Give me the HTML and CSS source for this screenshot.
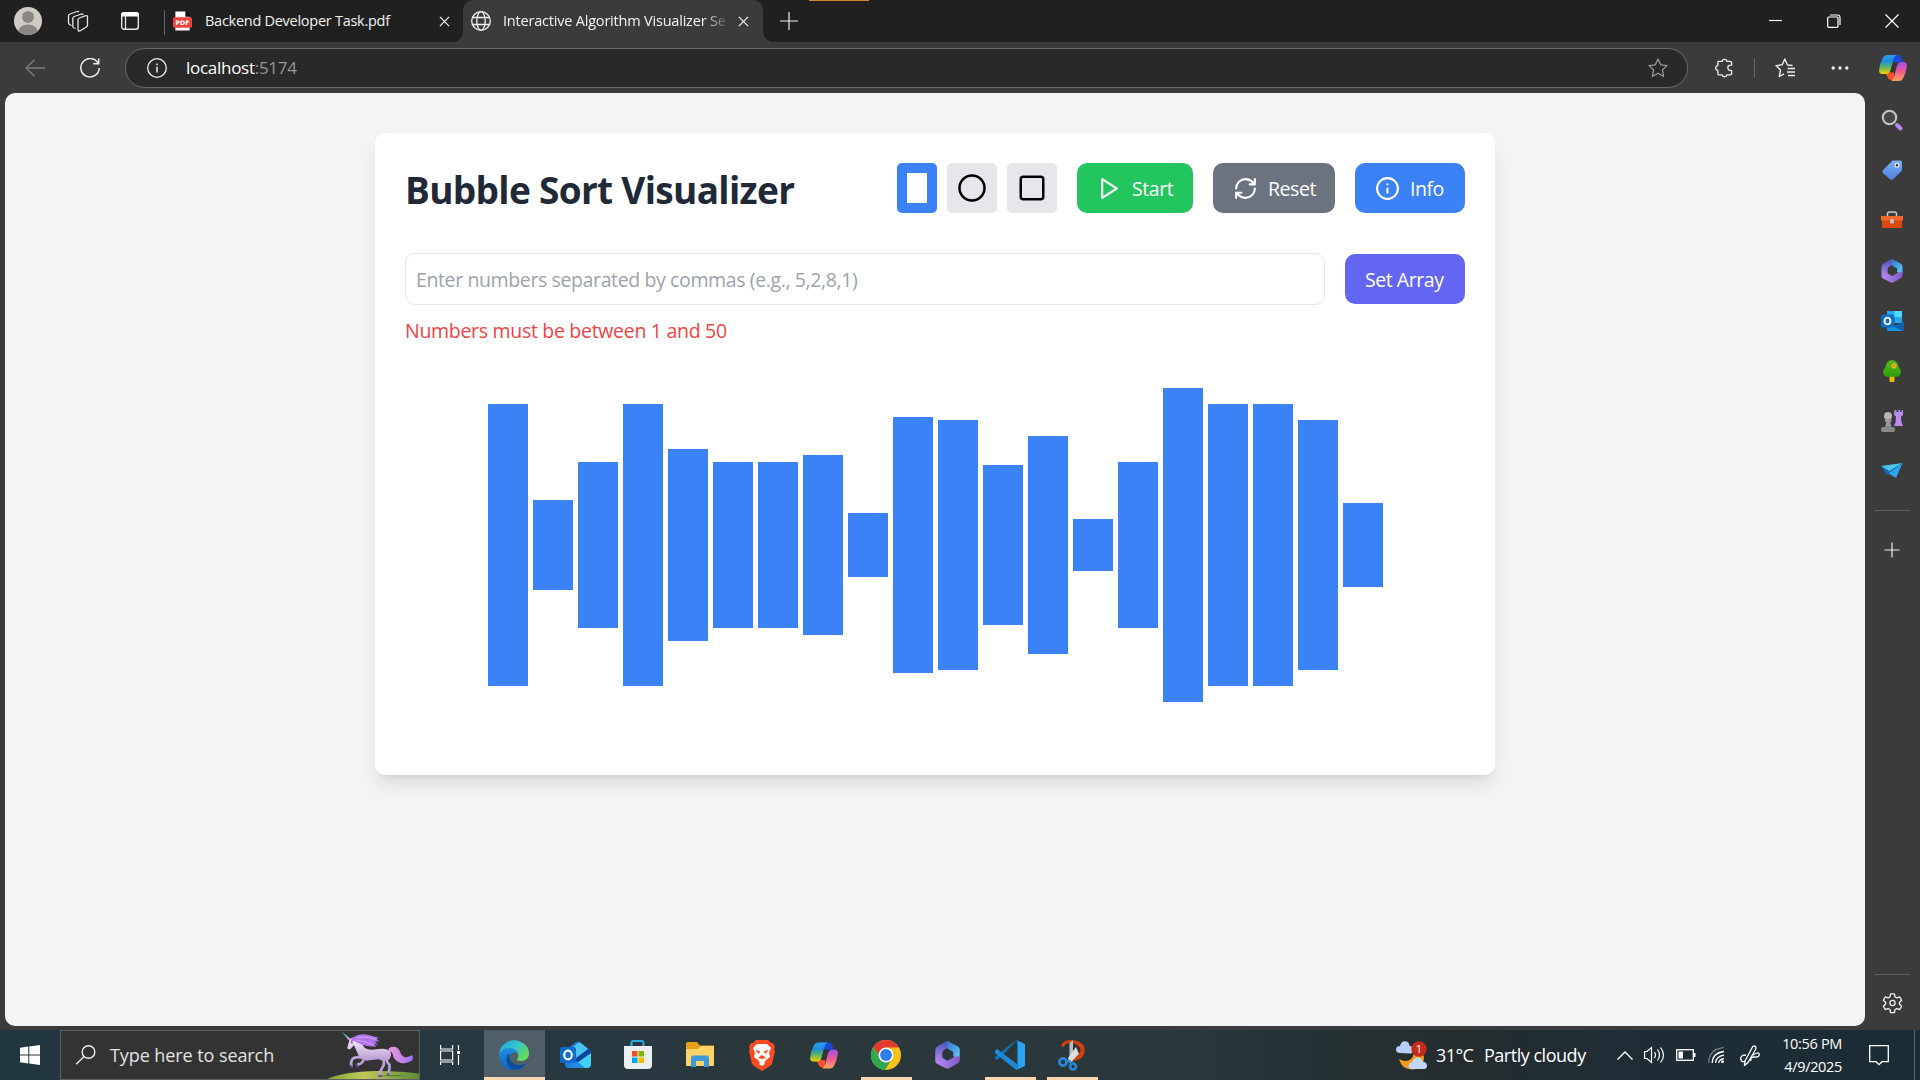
FILE: index.html
```html
<!DOCTYPE html>
<html lang="en">
<head>
<meta charset="utf-8">
<title>Interactive Algorithm Visualizer</title>
<link rel="stylesheet" href="styles.css">
</head>
<body>
<svg class="defs" width="0" height="0" aria-hidden="true">
  <defs>
    <linearGradient id="cpA" x1="0" y1="0" x2="0" y2="1"><stop offset="0" stop-color="#2a9df4"/><stop offset=".35" stop-color="#1b8fd8"/><stop offset=".65" stop-color="#5fb760"/><stop offset="1" stop-color="#f5d000"/></linearGradient>
    <linearGradient id="cpB" x1="0" y1="0" x2="0" y2="1"><stop offset="0" stop-color="#a24df0"/><stop offset=".5" stop-color="#ef5b92"/><stop offset="1" stop-color="#ffa35c"/></linearGradient>
    <linearGradient id="mA" x1="0" y1="0" x2="1" y2="1"><stop offset="0" stop-color="#2b63c9"/><stop offset="1" stop-color="#62d2f8"/></linearGradient>
    <linearGradient id="mB" x1="0" y1="0" x2="0" y2="1"><stop offset="0" stop-color="#4a52b8"/><stop offset="1" stop-color="#b98af0"/></linearGradient>
    <linearGradient id="mC" x1="0" y1="0" x2="1" y2="0"><stop offset="0" stop-color="#b58cf2"/><stop offset="1" stop-color="#8458c9"/></linearGradient>
    <linearGradient id="edA" x1="0" y1="0" x2="1" y2=".6"><stop offset="0" stop-color="#1fa5e6"/><stop offset=".55" stop-color="#35c4c8"/><stop offset="1" stop-color="#62dd58"/></linearGradient>
    <linearGradient id="edB" x1="0" y1="0" x2="0" y2="1"><stop offset="0" stop-color="#1f8fe0"/><stop offset="1" stop-color="#1160b8"/></linearGradient>
    <linearGradient id="uniBody" x1="0" y1="0" x2="0" y2="1"><stop offset="0" stop-color="#f8f2f8"/><stop offset="1" stop-color="#b99ad6"/></linearGradient>
    <linearGradient id="uniTail" x1="0" y1="0" x2="1" y2="0"><stop offset="0" stop-color="#f29adf"/><stop offset="1" stop-color="#9b6cf5"/></linearGradient>
    <linearGradient id="uniHill" x1="0" y1="0" x2="1" y2="0"><stop offset="0" stop-color="#7da534"/><stop offset=".4" stop-color="#c2c85a"/><stop offset="1" stop-color="#5d8a3a"/></linearGradient>
    <linearGradient id="tagG" x1="0" y1="0" x2="0" y2="1"><stop offset="0" stop-color="#79aef5"/><stop offset="1" stop-color="#4f7fe0"/></linearGradient>
    <linearGradient id="treeG" x1="0" y1="0" x2="0" y2="1"><stop offset="0" stop-color="#55b81a"/><stop offset="1" stop-color="#2f9e0c"/></linearGradient>
    <symbol id="copilot" viewBox="0 0 28 26">
      <path d="M11 0h7.500q3 0 4 3l1.200 4H17l-3 0z" fill="#1c47d8"/>
      <path d="M6 17h5.500l3.500-1 0 9h-2.500q-3 0-4-3z" fill="#f5512c"/>
      <path d="M8.500 0h9q-2 .8-3 4l-3 11q-1 4-4.500 4H4q-4.500 0-3.800-4.500Q1 8 3.500 3.500 5 0 8.500 0z" fill="url(#cpA)"/>
      <path d="M19.500 26H12q2-1 3-4l3-11q1-4 4.500-4H24q4.500 0 3.800 4.500Q27 18 24.500 22.500 23 26 19.500 26z" fill="url(#cpB)"/>
      <path d="M14 9h3.500l-2.700 8.500h-3.600z" fill="#343638"/>
    </symbol>
    <symbol id="m365" viewBox="0 0 24 24">
      <path d="M7.500 2 11 .4q1-.5 2 0l8 4.400q1.500 1 1.500 2.500V14q0 1.500-1.500 1.200L17 13V9.500L12 6.500z" fill="url(#mA)"/>
      <path d="M11 .4 4 4Q1.500 5.500 1.500 8v9.500l6-3V10q0-1.500 3-3.300l2-1z" fill="url(#mB)"/>
      <path d="M1.500 17.500 7.500 14.300 12 17l5.500-3 5-1.500V16q0 2-1.500 3l-7.500 4.300q-1.500.8-3 0L3 19.500q-1.500-1-1.500-2z" fill="url(#mC)"/>
    </symbol>
    <symbol id="outlook" viewBox="0 0 24 24">
      <path d="M7 2h15v12H7z" fill="#28a8ea"/><path d="M14.500 2H22v6h-7.500z" fill="#50d9ff"/><path d="M7 8h7.500v6H7z" fill="#0364b8"/>
      <path d="M7 13l8 4 8.500-4.500V22H7z" fill="#1490df"/><path d="M23.500 12.500 14 18l9.500 4z" fill="#0a5fb0"/>
      <rect x="1" y="5.500" width="13" height="13" rx="1.500" fill="#0f6cc5"/><ellipse cx="7.500" cy="12" rx="3" ry="3.400" fill="none" stroke="#fff" stroke-width="1.900"/>
    </symbol>
  </defs>
</svg>

<div class="desktop">
  <header class="tabstrip">
    <span class="accent"></span>
    <svg class="ic avatar" viewBox="0 0 28 28"><clipPath id="av"><circle cx="14" cy="14" r="14"/></clipPath><g clip-path="url(#av)"><path d="M0 0h28v28H0z" fill="#cfccc8"/><circle cx="14" cy="10" r="6" fill="#8b8682"/><ellipse cx="14" cy="25" rx="10" ry="7.500" fill="#8b8682"/></g></svg>
    <svg class="ic workspaces" viewBox="0 0 22 22" fill="none" stroke="#e6e6e6" stroke-width="1.300" stroke-linejoin="round"><path d="M11 10q0-1.500 1.300-2l6.500-2.300q1.700-.5 1.700 1.300v8q0 1.300-1.200 2l-6 3.700Q11 21.800 11 19.500zM8.500 18.500 7 18Q5.800 17.500 5.800 16V8.500Q5.800 7 7.200 6.500L14.500 4q1.200-.3 1.700.8M4.500 15.500 3 14.800q-1.500-.8-1.500-2.300V6Q1.500 4.500 3 4L10 1.500q1.300-.4 2 .6"/></svg>
    <svg class="ic tabactions" viewBox="0 0 20 20"><rect x="1.700" y="1.700" width="16.600" height="16.600" rx="2.500" fill="none" stroke="#e6e6e6" stroke-width="1.400"/><path d="M1 5.500V4q0-3 3-3h12q3 0 3 3v1.500z" fill="#fff"/><path d="M5.500 5v13" stroke="#e6e6e6" stroke-width="1.300"/></svg>
    <span class="strip-rule"></span>
    <div class="tab">
      <svg class="pdf" viewBox="0 0 20 20"><path d="M2.500 0H13l4.500 4.500V20h-15z" fill="#fff"/><path d="M13 0h2l3 3.500v2h-5z" fill="#111"/><rect y="6" width="20" height="11" rx="1.500" fill="#f0443e"/><text x="10" y="14.300" text-anchor="middle" class="pdf-text">PDF</text></svg>
      <span class="tab-title t-pdf">Backend Developer Task.pdf</span>
      <svg class="close" viewBox="0 0 12 12"><path d="M1 1l10 10M11 1 1 11" stroke="#eee" stroke-width="1.400"/></svg>
    </div>
    <div class="tab active">
      <svg class="globe" viewBox="0 0 20 20" fill="none" stroke="#eee" stroke-width="1.300"><circle cx="10" cy="10" r="9.300"/><ellipse cx="10" cy="10" rx="4.200" ry="9.300"/><path d="M1.500 6.500h17M1.500 13.500h17"/></svg>
      <span class="tab-title t-viz">Interactive Algorithm Visualizer Se</span>
      <svg class="close" viewBox="0 0 12 12"><path d="M1 1l10 10M11 1 1 11" stroke="#eee" stroke-width="1.400"/></svg>
    </div>
    <svg class="newtab" viewBox="0 0 18 18"><path d="M9 0v18M0 9h18" stroke="#eee" stroke-width="1.200"/></svg>
    <div class="winctl">
      <svg viewBox="0 0 14 14"><path d="M0 6.500h13" stroke="#fff" stroke-width="1.200"/></svg>
      <svg viewBox="0 0 14 14" fill="none" stroke="#fff" stroke-width="1.200"><rect x=".7" y="3" width="10.300" height="10.300" rx="1"/><path d="M3 1h7.500Q13 1 13 3.500V11"/></svg>
      <svg viewBox="0 0 14 14"><path d="M.5.500l13 13M13.500.500l-13 13" stroke="#fff" stroke-width="1.200"/></svg>
    </div>
  </header>

  <div class="toolbar">
    <svg class="back" viewBox="0 0 20 18" fill="none" stroke="#7c7c7c" stroke-width="1.300"><path d="M20 9H1M9.500.7 1 9l8.500 8.300"/></svg>
    <svg class="reload" viewBox="0 0 20 20" fill="none" stroke="#eee" stroke-width="1.500"><path d="M18 5.200A9.200 9.200 0 1 0 19.200 10M18.700.500v5.200h-5.500"/></svg>
    <div class="address">
      <svg class="site" viewBox="0 0 20 20" fill="none" stroke="#eee" stroke-width="1.300"><circle cx="10" cy="10" r="9.300"/><path d="M10 8.800v5.700M10 5.500v1.700" stroke-width="1.500"/></svg>
      <span class="url">localhost<span class="port">:5174</span></span>
      <svg class="star" viewBox="0 0 20 20" fill="none" stroke="#9a9a9a" stroke-width="1.300" stroke-linejoin="round"><path d="m10 1 2.700 5.800 6.300.8-4.600 4.300 1.200 6.600L10 15.300l-5.600 3.200 1.200-6.600L1 7.600l6.300-.8z"/></svg>
    </div>
    <svg class="ext" viewBox="0 0 20 20" fill="none" stroke="#eee" stroke-width="1.400" stroke-linejoin="round"><path d="M4 3h3.500Q7.800 1 10 1t2.500 2H16q1.500 0 1.500 1.500V7q-4-.3-4 2.700t4 3v3q0 1.500-1.500 1.500h-3.500q-.3 2-2.500 2t-2.500-2H4.500Q3 17.200 3 15.700V12.500q-2.200-.3-2.200-2.500T3 7.300V4q0-1 1-1z"/></svg>
    <span class="tool-rule"></span>
    <svg class="favs" viewBox="0 0 20 20" fill="none" stroke="#eee" stroke-width="1.400" stroke-linejoin="round"><path d="M17.500 7.500 12.500 7 9.800 1 7.200 6.800 1 7.600l4.500 4.300-1.200 6.600L9 15.900M12.500 10.500H20M12 14h8M13 17.500h7"/></svg>
    <svg class="more" viewBox="0 0 18 6" fill="#eee"><circle cx="2.200" cy="3" r="1.700"/><circle cx="9" cy="3" r="1.700"/><circle cx="15.800" cy="3" r="1.700"/></svg>
    <svg class="cop"><use href="#copilot"/></svg>
  </div>

  <div class="workspace">
    <main class="page">
      <section class="card">
        <div class="head">
          <h1>Bubble Sort Visualizer</h1>
          <div class="actions">
            <div class="shapes">
              <button class="shape on"><span class="barglyph"></span></button>
              <button class="shape"><svg width="30" height="30" viewBox="0 0 24 24" fill="none" stroke="#000" stroke-width="2"><circle cx="12" cy="12" r="10"/></svg></button>
              <button class="shape"><svg width="30" height="30" viewBox="0 0 24 24" fill="none" stroke="#000" stroke-width="2"><rect x="3" y="3" width="18" height="18" rx="2"/></svg></button>
            </div>
            <button class="btn start"><svg class="bi" viewBox="0 0 24 24"><path d="M5 3l14 9-14 9z"/></svg><span>Start</span></button>
            <button class="btn reset"><svg class="bi" viewBox="0 0 24 24"><path d="M3 12a9 9 0 0 1 9-9 9.750 9.750 0 0 1 6.740 2.740L21 8M21 3v5h-5M21 12a9 9 0 0 1-9 9 9.750 9.750 0 0 1-6.740-2.740L3 16M8 16H3v5"/></svg><span>Reset</span></button>
            <button class="btn info"><svg class="bi" viewBox="0 0 24 24"><circle cx="12" cy="12" r="10"/><path d="M12 16v-4M12 8h.010"/></svg><span>Info</span></button>
          </div>
        </div>
        <div class="entry">
          <input type="text" placeholder="Enter numbers separated by commas (e.g., 5,2,8,1)">
          <button class="btn set"><span>Set Array</span></button>
        </div>
        <p class="error">Numbers must be between 1 and 50</p>
        <div class="bars">
          <i style="height:282px"></i><i style="height:90px"></i><i style="height:166px"></i><i style="height:282px"></i><i style="height:192px"></i><i style="height:166px"></i><i style="height:166px"></i><i style="height:180px"></i><i style="height:64px"></i><i style="height:256px"></i><i style="height:250px"></i><i style="height:160px"></i><i style="height:218px"></i><i style="height:52px"></i><i style="height:166px"></i><i style="height:314px"></i><i style="height:282px"></i><i style="height:282px"></i><i style="height:250px"></i><i style="height:84px"></i>
        </div>
      </section>
    </main>
    <aside class="sidebar">
      <div class="side-top">
        <svg viewBox="0 0 24 24"><circle cx="9.500" cy="9.500" r="6.700" fill="#48484a" stroke="#c4c4c4" stroke-width="2.100"/><path d="m17 17 3.500 3.500" stroke="#b58ae8" stroke-width="4" stroke-linecap="round"/></svg>
        <svg viewBox="0 0 24 24"><path d="M12.500 2.500H20q2 0 2 2v7q0 1-.8 1.800l-8 8q-1.700 1.500-3.200 0l-7-6.300q-1.500-1.500 0-3z" fill="url(#tagG)"/><circle cx="17" cy="7.300" r="1.900" fill="#333" stroke="#eee" stroke-width="1.200"/></svg>
        <svg viewBox="0 0 24 24"><path d="M7.500 8V6q0-2 2-2h5q2 0 2 2v2" fill="none" stroke="#c8c8c8" stroke-width="1.500"/><path d="M2 8h20v12H2z" fill="#d9480f"/><path d="M1 8h22v4.500H1z" fill="#f0682c"/><rect x="10" y="11" width="4" height="4.500" rx="1.500" fill="#c0c4c8"/></svg>
        <svg><use href="#m365"/></svg>
        <svg><use href="#outlook"/></svg>
        <svg viewBox="0 0 24 24"><rect x="9.500" y="15" width="5" height="8" rx="1" fill="#f5b800"/><path d="M12 1q5 0 6.500 6.500 2.500 3 2.300 6-.4 4-4.300 4.300h-9q-4-.3-4.300-4.300 0-3 2.300-6Q7 1 12 1z" fill="url(#treeG)"/><path d="M14 4.500v5M11.500 7h5" stroke="#f8c41c" stroke-width="2.800"/><circle cx="14" cy="7" r="1.300" fill="#ef7a18"/></svg>
        <svg viewBox="0 0 24 24"><path d="M14.500 1h2v2h1.700V1h2v2h1.600V1H23v5l-2 1.500.5 6 1.500 3.500h-9l1.500-3.500.5-6L14 6z" fill="#b98bea"/><circle cx="8" cy="7" r="4" fill="#b4b4b4"/><path d="M5 10.500h6.500v2.300H10l1.500 5H5l1.500-5H5z" fill="#9c9c9c"/><rect x="1" y="18" width="14" height="5" rx="2" fill="#8a8a8a"/></svg>
        <svg viewBox="0 0 24 24"><path d="M1 7 22.500 4 9 12.500z" fill="#48c5f5"/><path d="M1 7l9 5.500L22.500 4 7 16z" fill="#0f6bb8"/><path d="M22.500 4 16 19l-7.500-4.500z" fill="#2aa7ea"/></svg>
      </div>
      <hr>
      <svg class="plus" viewBox="0 0 16 16"><path d="M8 .500v15M.500 8h15" stroke="#eee" stroke-width="1.200"/></svg>
      <hr class="low">
      <svg class="gear" viewBox="0 0 22 22" fill="none" stroke="#eee" stroke-width="1.400" stroke-linejoin="round"><path d="M9 1.500h4l.7 3.200 1.800 1 3.100-1 2 3.500-2.400 2.200v1.700l2.400 2.200-2 3.500-3.100-1-1.800 1-.7 3.200H9l-.7-3.200-1.800-1-3.100 1-2-3.500 2.400-2.200v-1.700L1.400 8.200l2-3.500 3.100 1 1.800-1z"/><circle cx="11" cy="11" r="2.700"/></svg>
    </aside>
  </div>

  <footer class="taskbar">
    <div class="winstart"><svg width="20" height="20" viewBox="0 0 20 20" fill="#fff"><path d="M0 2.800 8.300 1.600V9.400H0zM9.300 1.500 20 0v9.400H9.300zM0 10.400h8.300v8L0 17.200zM9.300 10.400H20V20L9.300 18.500z"/></svg></div>
    <div class="searchbox">
      <svg class="lens" viewBox="0 0 20 20" fill="none" stroke="#eee" stroke-width="1.400"><circle cx="13" cy="7" r="6.300"/><path d="M8.500 11.500.7 19.300"/></svg>
      <span class="search-text">Type here to search</span>
      <svg class="unicorn" viewBox="980 273 277 144">
        <path d="M980 417q50-22 150-24 80 0 127 8v16z" fill="url(#uniHill)"/>
        <path d="M1130 409q50-8 90 0z" fill="#3c5b28" opacity=".6"/>
        <path d="M1166 325q22-12 33 8 8 22 22 18 10-2 14-6l7 8-5-1 1 8q-18 14-38 8-20-6-22-26-3-8-12-9z" fill="url(#uniTail)"/>
        <path d="M1082 352q-20-2-26 6-6 10-2 22M1090 360q-6 14-20 14M1148 356q8 16-2 28-6 8-8 22M1160 352q-2 14 8 22 2 10-4 28" fill="none" stroke="#bba2d8" stroke-width="8" stroke-linejoin="round"/>
        <path d="M1050 377l8 5M1068 373l6 9M1135 408h10M1160 403h8" stroke="#6b4a9c" stroke-width="6"/>
        <path d="M1048 298q14-12 26-2l20 28q10 8 36 4 30-6 41 8 6 14-6 24-12 6-30-2-20 2-38 4-18-2-22-16l-14-30-10 11q-8 3-10-3z" fill="url(#uniBody)"/>
        <path d="M1054 296q20-18 50-12l34 10-10 2 10 8-14 0 10 10-12-3 6 9q-30 0-50-10l-18-8-10 6z" fill="#b072ee"/>
        <path d="M1070 292q30-4 60 6M1068 300q25 2 50 14" fill="none" stroke="#d4a6fb" stroke-width="3"/>
        <path d="M1025 276l24 18-5 6z" fill="#65b9c9"/>
        <path d="M1040 290l12 6-4 8z" fill="#e28ad6"/>
        <circle cx="1055" cy="308" r="2.500" fill="#3c2b55"/>
      </svg>
    </div>
    <div class="taskview"><svg width="21" height="20" viewBox="0 0 21 20" fill="none" stroke="#fff" stroke-width="1.200"><path d="M.6 0v4h12V0M.6 6h12v9H.6zM.6 20v-3h12v3M18.500 0v5M18.500 10v10"/><path d="M17 6h3v3h-3z" fill="#fff" stroke="none"/></svg></div>
    <nav class="apps">
      <div class="app current"><svg width="30" height="30" viewBox="0 0 30 30"><path d="M.3 16Q0 7 6 3.500 13-2 21 1.500q9 4 9 12 0 6-6 7.200-5 .8-6-.8-.3-1 1-2.500 1.500-4-3-7Q8 7 .3 16z" fill="url(#edA)"/><path d="M.2 15Q3 8 10 8q7 0 9 5-7-2-8.500 4-1 7 5 10.500 5 2 10-2-4 5.500-11 5Q0 29 .2 15z" fill="url(#edB)"/><path d="M10.500 13Q5 18 9 25q2.500 4 8 4.500 6-.5 10-6-6 3-11 1-7-4-5.500-11.500z" fill="#0c4d9c"/></svg></div>
      <div class="app"><svg width="31" height="30" viewBox="0 0 31 30"><path d="M5 11 16 2q2-1 4 0l11 9v13q0 4-4 4H9q-4 0-4-4z" fill="#1f7fd6"/><path d="M9 11l9-8q2-1 4 1l6 5-14 10z" fill="#49c4f4"/><path d="M31 11v13q0 4-4 4H9l14-11z" fill="#3fd0f5"/><path d="M30 8 14 20v5l17-12z" fill="#0b469c"/><path d="M14 19 9 28h16z" fill="#1c8be0"/><rect y="7" width="16" height="16" rx="2" fill="#0f6cc9"/><ellipse cx="8" cy="15" rx="3.800" ry="4.300" fill="none" stroke="#fff" stroke-width="2.200"/></svg></div>
      <div class="app"><svg width="30" height="30" viewBox="0 0 30 30"><path d="M8.500 7V3q0-2 2-2h8q2 0 2 2v4" fill="none" stroke="#28a9e0" stroke-width="2.200"/><path d="M1 6h28v19q0 4-4 4H5q-4 0-4-4z" fill="#eceef0"/><path d="M9 11h5.500v5.500H9z" fill="#f25022"/><path d="M15.500 11H21v5.500h-5.500z" fill="#7fba00"/><path d="M9 17.500h5.500V23H9z" fill="#00a4ef"/><path d="M15.500 17.500H21V23h-5.500z" fill="#ffb900"/></svg></div>
      <div class="app"><svg width="28" height="26" viewBox="0 0 28 26"><path d="M0 2q0-2 2-2h9l3 3.500H28V22H0z" fill="#e3a21a"/><path d="M0 7h12l3-3h13v19q0 1-1 1H1q-1 0-1-1z" fill="#fdd365"/><path d="M5 25V16q0-2.500 2.500-2.500h13Q23 13.500 23 16v9h-5v-6h-8v6z" fill="#3f98dc"/></svg></div>
      <div class="app"><svg width="26" height="31" viewBox="0 0 26 31"><path d="M7 0h12l3 3 2 0 2 4-1 3 1 1-3 13-2 2-8 5-8-5-2-2L0 11l1-1-1-3 2-4 2 0z" fill="#fb4a20"/><path d="M8 4h10l4 4-2 5 1 4-4 3-2 3 1 1-3 2-3-2 1-1-2-3-4-3 1-4-2-5z" fill="#fff"/><path d="m6 10 5 1-1 3zM20 10l-5 1 1 3zM9 18l4-3 4 3-4 1z" fill="#fb4a20"/></svg></div>
      <div class="app"><svg width="28" height="27"><use href="#copilot"/></svg></div>
      <div class="app running"><svg width="30" height="30" viewBox="0 0 30 30"><circle cx="15" cy="15" r="15" fill="#fbc116"/><path d="M2 7.500A15 15 0 0 0 14 30l7-11.500-12.500.500z" fill="#2da94f"/><path d="M2 7.500 9 19l6-11.500z" fill="#2da94f"/><path d="M15 0A15 15 0 0 0 2 7.500l6.500 7.500L15 7.500h13A15 15 0 0 0 15 0z" fill="#e33b2e"/><circle cx="15" cy="15" r="7.500" fill="#fff"/><circle cx="15" cy="15" r="5.900" fill="#2f7df0"/></svg></div>
      <div class="app"><svg width="29" height="28"><use href="#m365"/></svg></div>
      <div class="app running"><svg width="30" height="30" viewBox="0 0 30 30"><path d="M22 0 5.500 17l-3.700 3L0 18.500V17L20 1z" fill="#1274bd"/><path d="M0 11l2-2 3.500 2.500L22 24v6l-2-1L0 13z" fill="#1b8bd6"/><path d="m21 0 9 4v22l-9 4q1.500-1 1.500-3V3q0-2-1.500-3z" fill="#28a5f2"/></svg></div>
      <div class="app running"><svg width="28" height="31" viewBox="0 0 28 31"><path d="M3 6Q5 0 12 0q12 0 14.500 8 1.500 12-12.500 13l-1-3q9-1 9.500-8Q21 3 12 3 7 3 6 7z" fill="#d43f0c"/><path d="M11.500 3 15 0v21l-3.500 2z" fill="#b9bdc2"/><path d="M10 18 18 7l3 7-9 9z" fill="#dadde0"/><circle cx="5" cy="22" r="3.600" fill="none" stroke="#2788d8" stroke-width="2.700"/><circle cx="15" cy="26.500" r="3" fill="none" stroke="#2788d8" stroke-width="2.700"/><path d="m7 20 6 2" stroke="#2788d8" stroke-width="2.700"/></svg></div>
    </nav>
    <div class="tray">
      <svg class="weather" viewBox="0 0 31 29"><path d="M18 7q9 1 10 9 0 11-11 12.500Q6 29 3 18q7 4 12 0 4-4 3-11z" fill="#f49a1c"/><path d="M4 12q-4 0-4-3.500Q0 5 4 5q1-5 5-4.800 4 .1 4.500 4.500Q17 5 17 9t-3 3.500z" fill="#b5cff8"/><path d="M16 28q-3.500 0-3.500-3.200 0-3 3.500-3.300 1.500-5 6-5 4 .2 5 4.500 4 .3 4 3.700 0 3-3 3.300z" fill="#c2d8fa"/><circle cx="23" cy="8" r="7.700" fill="#c42b1c"/><text x="23" y="12" text-anchor="middle" class="badge-text">1</text></svg>
      <span class="temp">31°C</span><span class="cond">Partly cloudy</span>
      <svg class="caret" viewBox="0 0 16 9" fill="none" stroke="#fff" stroke-width="1.400"><path d="m.5 8.500 7.500-7.500 7.500 7.500"/></svg>
      <svg class="sound" viewBox="0 0 21 18" fill="none" stroke="#fff" stroke-width="1.200"><path d="M.6 5.500H3L7.500 1.500v15L3 12.500H.6zM10.500 6q2 3 0 6M13.500 3.500q4 5.500 0 11M16.500 1.500q6 7.500 0 15"/></svg>
      <svg class="battery" viewBox="0 0 20 12"><rect x=".7" y=".7" width="16.600" height="10.600" fill="none" stroke="#fff" stroke-width="1.300"/><path d="M2.500 2.500H7v7H2.500zM18 4h1.500v4H18z" fill="#fff"/></svg>
      <svg class="wifi" viewBox="0 0 16 16" fill="none" stroke-width="1.300"><path d="M.7 16Q1 2 16 .7" stroke="#76838a"/><path d="M4.200 16Q4.500 6 16 4.500M7.500 16Q8 9.500 16 8.200M10.700 16q.5-3.800 5.300-4.300" stroke="#fff"/><circle cx="14.500" cy="14.700" r="1.400" fill="#fff"/></svg>
      <svg class="pen" viewBox="0 0 20 21" fill="none" stroke="#fff" stroke-width="1.300"><path d="M5 16 12.500 2q1.500-2 3-.5 1 1 0 3L8 17.500l-3.500 3zM6 10Q0 10 .8 14.500 2 18 5 16M13 10q6-4 6.300-.5 0 3-5.300 2.500-4 0-3 4"/></svg>
      <div class="clock"><span class="time">10:56 PM</span><span class="date">4/9/2025</span></div>
      <svg class="note" viewBox="0 0 20 21" fill="none" stroke="#fff" stroke-width="1.300"><path d="M.7.7h18.600v16H13l-3 3-3-3H.7z"/></svg>
      <span class="peek"></span>
    </div>
  </footer>
</div>
</body>
</html>
```

FILE: styles.css
```css
* { box-sizing: border-box; }
body { margin: 0; font-family: "Open Sans", "Noto Sans", sans-serif; overflow: hidden; }
svg { display: block; flex: none; }
.defs { position: absolute; }
.desktop { width: 1920px; height: 1080px; display: flex; flex-direction: column; background: #3b3b3b; }

/* tab strip */
.tabstrip { position: relative; height: 42px; background: #202020; display: flex; align-items: center; flex: none; }
.accent { position: absolute; left: 809px; top: 0; width: 60px; height: 1px; background: #d08a2c; }
.avatar { width: 28px; height: 28px; margin-left: 14px; }
.workspaces { width: 22px; height: 22px; margin-left: 25px; }
.tabactions { width: 20px; height: 20px; margin-left: 31px; }
.strip-rule { width: 1px; height: 25px; margin: 2px 0 0 24px; background: #666; }
.tab { width: 298px; height: 42px; display: flex; align-items: center; padding-left: 8px; color: #f2f2f2; font-size: 14.500px; }
.tab .pdf { width: 19px; height: 20px; margin-right: 13px; }
.pdf-text { font: bold 6.500px "DejaVu Sans", sans-serif; fill: #fff; }
.tab-title { white-space: nowrap; line-height: 20px; margin-top: -1px; }
.t-pdf { width: 234px; letter-spacing: -0.27px; }
.close { width: 11px; height: 11px; margin-top: 1px; }
.tab.active { width: 300px; background: #3b3b3b; border-radius: 10px 10px 0 0; padding-left: 8px; position: relative; }
.tab.active::before, .tab.active::after { content: ""; position: absolute; bottom: 0; width: 10px; height: 10px; }
.tab.active::before { left: -10px; background: radial-gradient(circle at 0 0, transparent 9.500px, #3b3b3b 10px); }
.tab.active::after { right: -10px; background: radial-gradient(circle at 100% 0, transparent 9.500px, #3b3b3b 10px); }
.globe { width: 20px; height: 20px; margin-right: 12px; }
.t-viz { width: 225px; letter-spacing: -0.2px; margin-right: 10px; mask-image: linear-gradient(to right, #000 200px, transparent 227px); }
.newtab { width: 18px; height: 18px; margin-left: 17px; }
.winctl { margin-left: auto; display: flex; gap: 44px; padding-right: 21px; }
.winctl svg { width: 14px; height: 14px; }

/* navigation bar */
.toolbar { height: 51px; flex: none; display: flex; align-items: center; }
.back { width: 20px; height: 18px; margin-left: 25px; }
.reload { width: 20px; height: 20px; margin-left: 35px; }
.address { margin-left: 25px; width: 1563px; height: 40px; border: 1px solid #686868; border-radius: 20px; background: #292929; display: flex; align-items: center; padding: 0 19px 0 21px; }
.site { width: 20px; height: 20px; }
.url { margin-left: 19px; font-size: 17px; letter-spacing: -0.28px; color: #fff; line-height: 24px; flex: 1; }
.port { color: #969696; }
.star { width: 20px; height: 20px; }
.ext { width: 19px; height: 20px; margin-left: 27px; }
.tool-rule { width: 1px; height: 20px; background: #646464; margin-left: 20px; }
.favs { width: 20px; height: 20px; margin-left: 20px; }
.more { width: 18px; height: 6px; margin-left: 36px; }
.cop { width: 28px; height: 26px; margin-left: 30px; }

.workspace { display: flex; height: 937px; flex: none; }
.page { width: 1860px; height: 933px; margin-left: 5px; background: #f3f4f6; border-radius: 10px; padding-top: 40px; }
.sidebar { flex: 1; display: flex; flex-direction: column; align-items: center; padding-right: 1px; }
.side-top { display: flex; flex-direction: column; gap: 26.200px; padding-top: 15px; }
.side-top svg { width: 24px; height: 24px; }
.sidebar hr { width: 35px; height: 1px; border: 0; background: #5c5c5c; margin: 27px 0 0; }
.plus { width: 16px; height: 16px; margin-top: 31px; }
.sidebar .low { margin-top: auto; }
.gear { width: 21px; height: 22px; margin: 17px 0 16px; }

/* visualizer card */
.card { width: 1120px; height: 642px; margin: 0 auto; background: #fff; border-radius: 10px; padding: 30px; box-shadow: 0 12.500px 18.750px -3.750px rgba(0,0,0,.1), 0 5px 7.500px -5px rgba(0,0,0,.1); }
.head { display: flex; justify-content: space-between; height: 50px; }
h1 { margin: 2px 0 0; font-size: 37px; line-height: 50px; font-weight: 700; letter-spacing: -0.68px; color: #1f2937; white-space: nowrap; }
.actions { display: flex; gap: 20px; }
.shapes { display: flex; gap: 10px; }
button { border: 0; font: inherit; padding: 0; }
.shape { padding: 10px; border-radius: 5px; background: #e5e7eb; }
.shape.on { background: #3b82f6; }
.barglyph { display: block; width: 20px; height: 30px; background: #fff; }
.btn { height: 50px; padding: 0 0 0 20px; border-radius: 10px; color: #fff; font-size: 19.500px; letter-spacing: -0.45px; display: flex; align-items: center; gap: 10px; white-space: nowrap; }
.btn span { margin-top: 1px; }
.bi { width: 25px; height: 25px; fill: none; stroke: #fff; stroke-width: 2; stroke-linecap: round; stroke-linejoin: round; }
.start { width: 116px; background: #22c55e; }
.reset { width: 122px; background: #6b7280; }
.info { width: 110px; background: #3b82f6; }
.set { width: 120px; background: #6366f1; }
.entry { margin-top: 40px; display: flex; align-items: center; gap: 20px; }
input { flex: 1; height: 52px; border: 1px solid #e5e7eb; border-radius: 10px; padding: 0 10px; font: 19.500px "Open Sans", "Noto Sans", sans-serif; letter-spacing: -0.38px; background: #fff; }
input::placeholder { color: #9ca3af; }
.error { margin: 11px 0 0; line-height: 30px; font-size: 19.500px; letter-spacing: -0.3px; color: #ef4444; }
.bars { height: 400px; margin-top: -1px; display: flex; justify-content: center; align-items: center; gap: 5px; }
.bars i { width: 40px; background: #3b82f6; }

/* taskbar */
.taskbar { height: 50px; flex: none; display: flex; background: linear-gradient(90deg, #223640 0, #263840 25%, #2b383b 45%, #29363b 62%, #242c2e 76%, #1e2d35 86%, #1b2c36 100%); color: #fff; }
.winstart { width: 60px; display: flex; align-items: center; justify-content: center; }
.searchbox { width: 360px; background: #333; border: 1px solid #5e5e5e; display: flex; align-items: center; padding-left: 14px; }
.lens { width: 21px; height: 20px; }
.search-text { margin: -1px 0 0 14px; font-size: 18px; letter-spacing: -0.08px; white-space: nowrap; color: #e2e2e2; flex: 1; }
.unicorn { width: 92px; height: 48px; }
.taskview { width: 64px; padding-left: 20px; display: flex; align-items: center; }
.apps { display: flex; gap: 1px; }
.app { width: 61px; display: flex; align-items: center; justify-content: center; position: relative; padding-right: 2px; }
.current { background: #505e67; }
.current::after, .running::after { content: ""; position: absolute; bottom: 0; left: 5px; right: 5px; height: 3px; background: #fcd7b0; }
.current::after { left: 0; right: 0; }
.tray { margin-left: auto; display: flex; align-items: center; white-space: nowrap; font-size: 18px; }
.weather { width: 31px; height: 29px; margin-right: 9px; }
.badge-text { font: 11px "Open Sans", sans-serif; fill: #fff; }
.temp { width: 48px; letter-spacing: -0.6px; }
.cond { width: 102px; letter-spacing: -0.48px; }
.caret { width: 16px; height: 9px; margin-left: 31px; }
.sound { width: 21px; height: 18px; margin-left: 11px; }
.battery { width: 20px; height: 12px; margin-left: 11px; }
.wifi { width: 16px; height: 16px; margin-left: 12px; }
.pen { width: 20px; height: 21px; margin-left: 16px; }
.clock { width: 62px; margin-left: 20px; margin-right: 1px; display: flex; flex-direction: column; align-items: flex-end; font-size: 14.500px; line-height: 23px; letter-spacing: -0.33px; }
.note { width: 20px; height: 21px; margin-left: 26px; }
.peek { width: 1px; height: 50px; margin: 0 5px 0 25px; background: #5d6a71; }
```
